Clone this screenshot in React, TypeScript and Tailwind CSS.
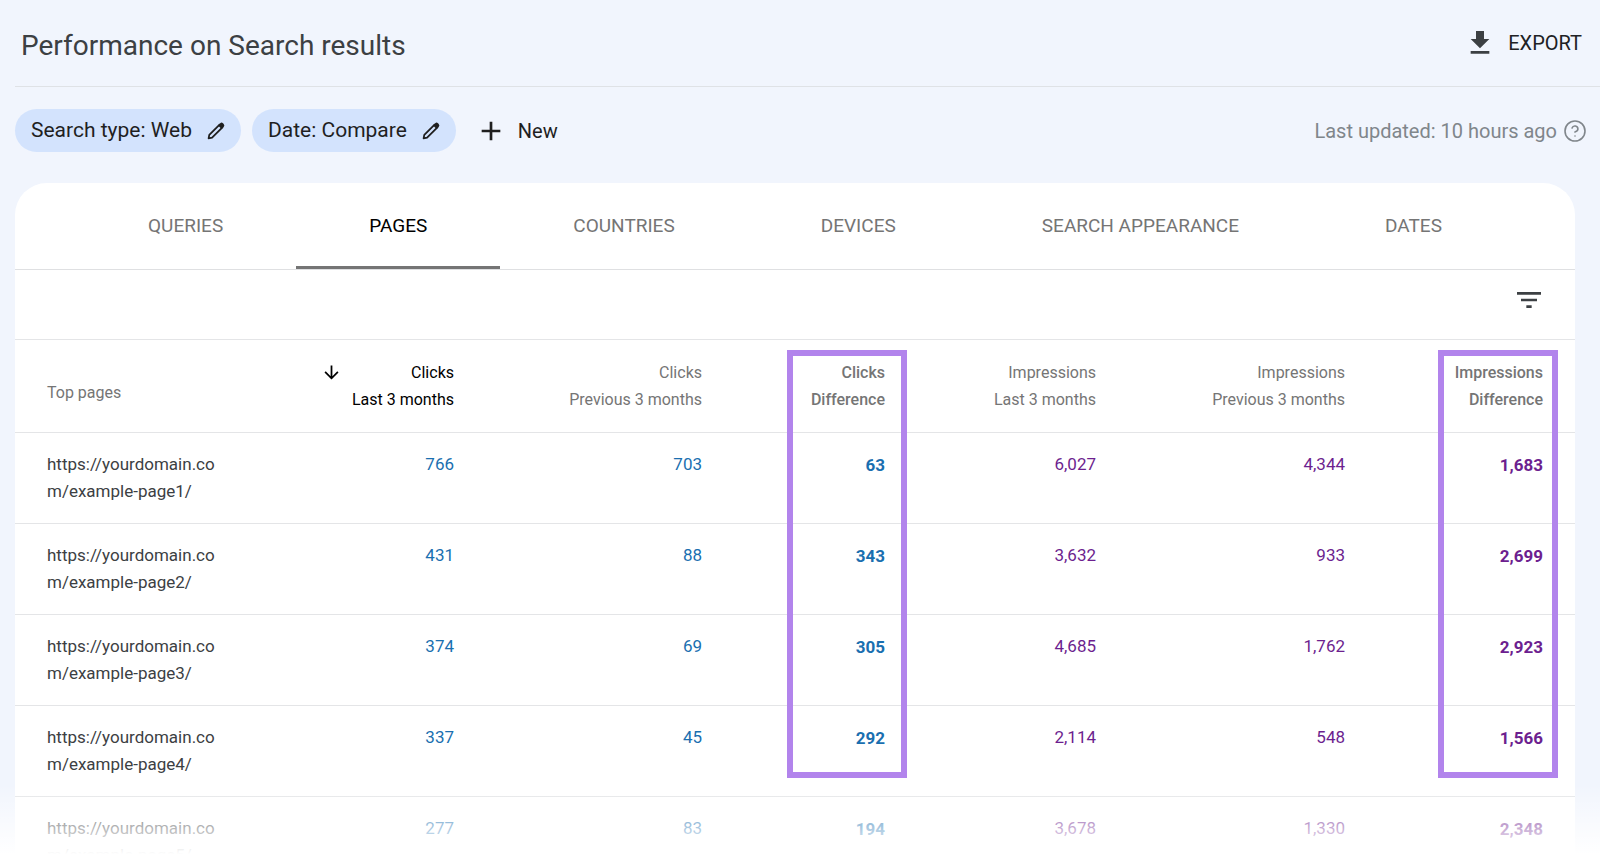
import { CircleHelp } from "lucide-react";
import { MdAdd, MdArrowDownward, MdFilterList, MdGetApp } from "react-icons/md";
import clsx from "clsx";

const tabs = [
  "QUERIES",
  "PAGES",
  "COUNTRIES",
  "DEVICES",
  "SEARCH APPEARANCE",
  "DATES",
];

const filters = ["Search type: Web", "Date: Compare"];

const columns = [
  { metric: "Clicks", period: "Last 3 months", sorted: true },
  { metric: "Clicks", period: "Previous 3 months" },
  { metric: "Clicks", period: "Difference", box: "right-[10px]" },
  { metric: "Impressions", period: "Last 3 months" },
  { metric: "Impressions", period: "Previous 3 months" },
  { metric: "Impressions", period: "Difference", box: "right-[17px]" },
];

const rows = [
  {
    url: "https://yourdomain.com/example-page1/",
    values: ["766", "703", "63", "6,027", "4,344", "1,683"],
  },
  {
    url: "https://yourdomain.com/example-page2/",
    values: ["431", "88", "343", "3,632", "933", "2,699"],
  },
  {
    url: "https://yourdomain.com/example-page3/",
    values: ["374", "69", "305", "4,685", "1,762", "2,923"],
  },
  {
    url: "https://yourdomain.com/example-page4/",
    values: ["337", "45", "292", "2,114", "548", "1,566"],
  },
  {
    url: "https://yourdomain.com/example-page5/",
    values: ["277", "83", "194", "3,678", "1,330", "2,348"],
  },
];

function PencilIcon() {
  return (
    <svg width="18" height="18" viewBox="0 0 18 18" fill="none">
      <path
        d="M1.6 16.4 2.3 12.9 12.6 2.6 15.4 5.4 5.1 15.7Z"
        stroke="currentColor"
        strokeWidth="1.8"
        strokeLinejoin="round"
      />
      <path
        d="M11 3.4 13.2 1.2Q14.6 0 16 1.3L16.7 2Q18 3.4 16.8 4.8L14.6 7Z"
        fill="currentColor"
      />
    </svg>
  );
}

function Header() {
  return (
    <header className="ml-[15px] flex h-[87px] items-center justify-between border-b border-[#dfe2e6] pr-[18px] pl-[6px]">
      <h1 className="pt-[5px] text-[28px] leading-9 text-[#3c4043]">
        Performance on Search results
      </h1>
      <button className="flex items-center gap-3 text-[20px] text-[#202124]">
        <MdGetApp size={32} className="text-[#3c4043]" />
        EXPORT
      </button>
    </header>
  );
}

function Filters() {
  return (
    <div className="flex items-center justify-between pt-[22px] pr-[13px] pl-[15px]">
      <div className="flex items-center gap-[11px]">
        {filters.map((filter) => (
          <button
            key={filter}
            className="flex h-[43px] items-center gap-[15px] rounded-full bg-[#d3e3fd] px-4 text-[21px] text-[#1f1f1f]"
          >
            {filter}
            <PencilIcon />
          </button>
        ))}
        <button className="ml-2 flex h-[43px] items-center gap-[11px] text-[20px] text-[#1f1f1f]">
          <MdAdd size={32} />
          New
        </button>
      </div>
      <p className="flex items-center gap-[6px] text-[20px] text-[#80868b]">
        Last updated: 10 hours ago
        <CircleHelp size={24} strokeWidth={1.6} />
      </p>
    </div>
  );
}

function Tabs() {
  return (
    <nav className="flex h-[87px] border-b border-[#dfe0e2] px-[60px] text-[19px]">
      {tabs.map((tab) => (
        <button
          key={tab}
          className={clsx(
            "flex-auto",
            tab === "PAGES"
              ? "border-b-3 border-[#757575] pt-[3px] text-black"
              : "text-[#757575]"
          )}
        >
          {tab}
        </button>
      ))}
    </nav>
  );
}

function PagesTable() {
  return (
    <table className="w-full table-fixed text-[17px] leading-[27px]">
      <colgroup>
        <col className="w-[223px]" />
        <col className="w-[248px]" />
        <col className="w-[248px]" />
        <col className="w-[183px]" />
        <col className="w-[211px]" />
        <col className="w-[249px]" />
        <col className="w-[198px]" />
      </colgroup>
      <thead>
        <tr className="h-[92px] border-b border-[#e4e5e7] align-top text-[16px] text-[#757575]">
          <th className="pt-[39px] pl-8 text-left font-normal">Top pages</th>
          {columns.map((col) => (
            <th
              key={col.metric + col.period}
              className={clsx(
                "relative pt-[19px] pr-8 text-right",
                col.box ? "font-medium" : "font-normal",
                col.sorted && "text-black"
              )}
            >
              <span
                className={clsx(
                  "flex items-center",
                  col.sorted ? "justify-between pl-[83px]" : "justify-end"
                )}
              >
                {col.sorted && <MdArrowDownward size={21} />}
                {col.metric}
              </span>
              {col.period}
              {col.box && (
                <div
                  className={clsx(
                    "absolute top-[10px] h-[428px] w-[120px] border-6 border-[#b284ec]",
                    col.box
                  )}
                />
              )}
            </th>
          ))}
        </tr>
      </thead>
      <tbody>
        {rows.map((row) => (
          <tr
            key={row.url}
            className="h-[91px] border-b border-[#e4e5e7] align-top"
          >
            <td className="pt-[18px] pr-4 pl-8 break-all text-[#3c4043]">
              {row.url}
            </td>
            {row.values.map((value, i) => (
              <td
                key={i}
                className={clsx(
                  "pr-8 text-right",
                  columns[i].box ? "pt-[19px] font-bold" : "pt-[18px]",
                  columns[i].metric === "Clicks"
                    ? "text-[#1a6fb0]"
                    : "text-[#6d1f8f]"
                )}
              >
                {value}
              </td>
            ))}
          </tr>
        ))}
      </tbody>
    </table>
  );
}

export default function App() {
  return (
    <main className="relative h-screen overflow-hidden bg-[#f1f5fd] font-[Roboto,sans-serif]">
      <Header />
      <Filters />
      <section className="mt-[31px] mr-[25px] ml-[15px] rounded-t-[32px] bg-white">
        <Tabs />
        <div className="flex h-[70px] justify-end border-b border-[#e4e5e7] pt-[14px] pr-[30px]">
          <button aria-label="Filter rows" className="h-8">
            <MdFilterList size={32} className="text-[#3c4043]" />
          </button>
        </div>
        <PagesTable />
      </section>
      <div className="pointer-events-none absolute inset-x-0 bottom-0 h-20 bg-linear-to-b from-transparent to-white to-88%" />
    </main>
  );
}
